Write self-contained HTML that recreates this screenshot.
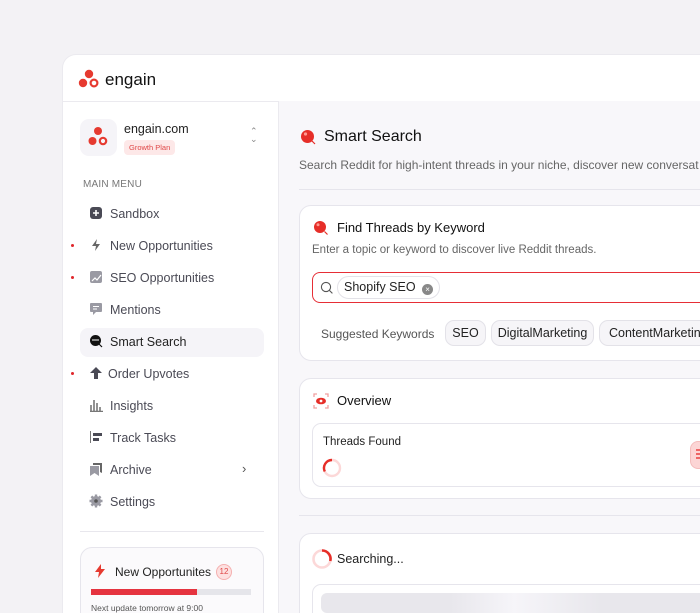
<!DOCTYPE html>
<html><head><meta charset="utf-8"><style>
*{box-sizing:border-box;margin:0;padding:0}
html,body{width:700px;height:613px;overflow:hidden}
body{background:#f3f2f5;font-family:"Liberation Sans",sans-serif;position:relative}
.frame{position:absolute;left:62px;top:54px;width:638px;height:559px;background:#fff;border-radius:14px 0 0 0;border:1px solid #ebeaef;border-right:none;border-bottom:none;overflow:hidden}
.hdr{height:47px;border-bottom:1px solid #ebeaef;position:relative}
.side{position:absolute;left:0;top:47px;width:216px;height:512px;border-right:1px solid #ebeaef;background:#fff;overflow:hidden}
.main{position:absolute;left:216px;top:46px;width:422px;height:513px;background:#f8f7fa;overflow:hidden}
.t{position:absolute;white-space:nowrap}
.mi{position:absolute;left:47px;font-size:12.5px;color:#4a4a55}
.dot{position:absolute;left:8px;width:3px;height:3px;background:#e0262b;border-radius:50%}
.ic{position:absolute;left:26px}
.card{position:absolute;background:#fff;border:1px solid #e6e5ec;border-radius:12px}
.chip{position:absolute;top:0;height:26px;border:1px solid #e3e2e8;border-radius:9px;background:#f6f5f8;font-size:12.5px;color:#222;line-height:24px;text-align:center}
</style></head><body>
<div class="frame">
 <div class="hdr">
  <svg class="t" style="left:15px;top:14px" width="22" height="20" viewBox="0 0 22 20"><circle cx="11" cy="5" r="4.2" fill="#e63a30"/><circle cx="5" cy="14" r="4.2" fill="#e63a30"/><circle cx="16" cy="14" r="3.4" fill="none" stroke="#e63a30" stroke-width="2.2"/></svg>
  <div class="t" style="left:42px;top:15px;font-size:17px;color:#111">engain</div>
 </div>
 <div class="side">
  <div class="t" style="left:17px;top:17px;width:37px;height:37px;background:#f5f4f8;border-radius:9px"></div>
  <svg class="t" style="left:24px;top:24px" width="22" height="22" viewBox="0 0 22 22"><circle cx="11" cy="5" r="4" fill="#e63a30"/><circle cx="5.5" cy="15" r="4" fill="#e63a30"/><circle cx="16" cy="15" r="3.2" fill="none" stroke="#e63a30" stroke-width="2.2"/></svg>
  <div class="t" style="left:61px;top:20px;font-size:12.5px;color:#222">engain.com</div>
  <div class="t" style="left:61px;top:38px;height:15px;padding:0 5px;background:#fde8e8;border-radius:4px;font-size:7.5px;color:#e04848;line-height:15px">Growth Plan</div>
  <div class="t" style="left:187px;top:25px;font-size:9px;color:#888;line-height:8px">⌃<br>⌄</div>
  <div class="t" style="left:20px;top:77px;font-size:10px;color:#777;letter-spacing:.2px">MAIN MENU</div>

  <svg class="ic" style="top:104px" width="14" height="14"><rect x="1" y="1" width="12" height="12" rx="3" fill="#4a4a55"/><path d="M7 4v6M4 7h6" stroke="#fff" stroke-width="1.6"/></svg>
  <div class="mi t" style="top:105px">Sandbox</div>

  <div class="dot" style="top:142px"></div>
  <svg class="ic" style="top:136px" width="14" height="14"><path d="M8 1L3 8h4l-1 5 5-7H7z" fill="#666"/></svg>
  <div class="mi t" style="top:137px">New Opportunities</div>

  <div class="dot" style="top:174px"></div>
  <svg class="ic" style="top:168px" width="14" height="14"><rect x="1" y="1" width="12" height="12" rx="2" fill="#9a9aa3"/><path d="M3 11l3-3 2 2 4-5" stroke="#fff" stroke-width="1.2" fill="none"/></svg>
  <div class="mi t" style="top:169px">SEO Opportunities</div>

  <svg class="ic" style="top:200px" width="14" height="14"><path d="M2 1h10a1 1 0 011 1v7a1 1 0 01-1 1H7l-3 3v-3H2a1 1 0 01-1-1V2a1 1 0 011-1z" fill="#9a9aa3"/><path d="M4 4.5h6M4 7h4" stroke="#fff" stroke-width="1"/></svg>
  <div class="mi t" style="top:201px">Mentions</div>

  <div class="t" style="left:17px;top:226px;width:184px;height:29px;background:#f5f4f8;border-radius:8px"></div>
  <svg class="ic" style="top:232px" width="14" height="14"><circle cx="6.5" cy="6.5" r="5.5" fill="#111"/><path d="M10 10l3 3" stroke="#111" stroke-width="1.2"/><path d="M3 6h7" stroke="#fff" stroke-width="1"/></svg>
  <div class="mi t" style="top:233px;color:#222">Smart Search</div>

  <div class="dot" style="top:270px"></div>
  <svg class="t" style="left:26px;top:264px" width="14" height="14"><path d="M7 1l6 6H9v6H5V7H1z" fill="#4a4a55"/></svg>
  <div class="mi t" style="left:45px;top:265px">Order Upvotes</div>

  <svg class="ic" style="top:296px" width="14" height="14"><path d="M2 13V7M5 13V2M8 13V5M11 13V9M1 13.5h13" stroke="#777" stroke-width="1.6"/></svg>
  <div class="mi t" style="top:297px">Insights</div>

  <svg class="ic" style="top:328px" width="14" height="14"><path d="M1.5 1v12" stroke="#777" stroke-width="1"/><rect x="4" y="3" width="9" height="3" fill="#4a4a55"/><rect x="4" y="8" width="6" height="3" fill="#4a4a55"/></svg>
  <div class="mi t" style="top:329px">Track Tasks</div>

  <svg class="ic" style="top:360px" width="14" height="14"><path d="M1 4h9v10l-4.5-3L1 14z" fill="#9a9aa3"/><path d="M4 1h9v10l-2-1V3H4z" fill="#666"/></svg>
  <div class="mi t" style="top:361px">Archive</div>
  <div class="t" style="left:179px;top:359px;font-size:13px;color:#555">›</div>

  <svg class="ic" style="top:392px" width="14" height="14"><circle cx="7" cy="7" r="5" fill="#9a9aa3"/><g stroke="#9a9aa3" stroke-width="2.4"><path d="M7 0.5v13M0.5 7h13M2.4 2.4l9.2 9.2M11.6 2.4l-9.2 9.2"/></g><circle cx="7" cy="7" r="1.8" fill="#555"/></svg>
  <div class="mi t" style="top:393px">Settings</div>

  <div class="t" style="left:17px;top:429px;width:184px;height:1px;background:#e8e7ed"></div>
  <div class="t" style="left:17px;top:445px;width:184px;height:80px;border:1px solid #e6e5ec;border-radius:12px;background:#fbfafc"></div>
  <svg class="t" style="left:31px;top:462px" width="12" height="14"><path d="M7 0L1 8h4l-1 6 7-9H7z" fill="#e63a30"/></svg>
  <div class="t" style="left:52px;top:463px;font-size:12px;color:#222">New Opportunites</div>
  <div class="t" style="left:153px;top:462px;width:16px;height:16px;border-radius:50%;background:#fde0e0;border:1px solid #f4b0b0;font-size:8px;color:#e04848;text-align:center;line-height:14px">12</div>
  <div class="t" style="left:28px;top:487px;width:160px;height:6px;background:#e5e5ea"></div>
  <div class="t" style="left:28px;top:487px;width:106px;height:6px;background:#e5333f"></div>
  <div class="t" style="left:28px;top:501px;font-size:8.5px;color:#555">Next update tomorrow at 9:00</div>
 </div>

 <div class="main">
  <svg class="t" style="left:21px;top:28px" width="17" height="17"><circle cx="7.5" cy="7.5" r="6.5" fill="#e62e28"/><circle cx="5.5" cy="5" r="1.6" fill="#ff9a90"/><path d="M12 12l3 3" stroke="#e62e28" stroke-width="1.2"/></svg>
  <div class="t" style="left:45px;top:27px;font-size:16px;color:#111">Smart Search</div>
  <div class="t" style="left:20px;top:57px;font-size:12px;color:#666">Search Reddit for high-intent threads in your niche, discover new conversat</div>
  <div class="t" style="left:20px;top:88px;width:440px;height:1px;background:#e6e5ec"></div>

  <div class="card" style="left:20px;top:104px;width:440px;height:156px">
   <svg class="t" style="left:13px;top:14px" width="16" height="16"><circle cx="7" cy="7" r="6" fill="#e62e28"/><circle cx="5" cy="4.8" r="1.5" fill="#ff9a90"/><path d="M11.5 11.5l3 3" stroke="#e62e28" stroke-width="1.2"/></svg>
   <div class="t" style="left:37px;top:14px;font-size:13px;color:#111">Find Threads by Keyword</div>
   <div class="t" style="left:12px;top:38px;font-size:11.5px;color:#666">Enter a topic or keyword to discover live Reddit threads.</div>
   <div class="t" style="left:12px;top:66px;width:440px;height:31px;border:1.3px solid #e62e36;border-radius:8px"></div>
   <svg class="t" style="left:20px;top:75px" width="14" height="14"><circle cx="6" cy="6" r="4.6" stroke="#555" stroke-width="1.1" fill="none"/><path d="M9.4 9.4l3 3" stroke="#555" stroke-width="1.1"/></svg>
   <div class="t" style="left:37px;top:70px;height:23px;padding:0 6px;border:1px solid #e3e2e8;border-radius:12px;font-size:12.5px;color:#222;line-height:21px">Shopify SEO <span style="display:inline-block;width:11px;height:11px;border-radius:50%;background:#888;color:#fff;font-size:8px;line-height:11px;text-align:center;vertical-align:-1px;margin-left:3px">×</span></div>
   <div class="t" style="left:21px;top:121px;font-size:12px;color:#555">Suggested Keywords</div>
   <div style="position:absolute;left:145px;top:114px">
    <div class="chip" style="left:0;width:41px">SEO</div>
    <div class="chip" style="left:46px;width:103px">DigitalMarketing</div>
    <div class="chip" style="left:154px;width:120px;text-align:left;padding-left:9px">ContentMarketing</div>
   </div>
  </div>

  <div class="card" style="left:20px;top:277px;width:440px;height:121px">
   <svg class="t" style="left:13px;top:14px" width="16" height="16"><path d="M1 4V1h3M12 1h3v3M15 12v3h-3M4 15H1v-3" stroke="#f0a0a0" stroke-width="1.3" fill="none"/><ellipse cx="8" cy="8" rx="5" ry="3.3" fill="#e62e28"/><circle cx="8" cy="8" r="1.4" fill="#fff"/></svg>
   <div class="t" style="left:37px;top:14px;font-size:13px;color:#111">Overview</div>
   <div class="t" style="left:12px;top:44px;width:440px;height:64px;border:1px solid #e6e5ec;border-radius:9px"></div>
   <div class="t" style="left:23px;top:57px;font-size:11.5px;color:#222">Threads Found</div>
   <svg class="t" style="left:22px;top:79px" width="20" height="20"><circle cx="10" cy="10" r="8" fill="none" stroke="#fcd8d8" stroke-width="2.4"/><path d="M10 2A8 8 0 0 0 2.8 13.5" fill="none" stroke="#e62e28" stroke-width="2.4"/></svg>
   <div class="t" style="left:390px;top:62px;width:30px;height:28px;border-radius:8px;background:#fcd5d5;border:1px solid #f4bcbc"></div>
   <div class="t" style="left:396px;top:70px;width:6px;height:2px;background:#e66;box-shadow:0 4px 0 #e66,0 8px 0 #e66"></div>
  </div>

  <div class="t" style="left:20px;top:414px;width:440px;height:1px;background:#e6e5ec"></div>

  <div class="card" style="left:20px;top:432px;width:440px;height:140px">
   <svg class="t" style="left:11px;top:14px" width="22" height="22"><circle cx="11" cy="11" r="8.5" fill="none" stroke="#fcd8d8" stroke-width="2.6"/><path d="M11 2.5A8.5 8.5 0 0 1 19.3 13" fill="none" stroke="#e62e28" stroke-width="2.6"/></svg>
   <div class="t" style="left:37px;top:18px;font-size:12.5px;color:#222">Searching...</div>
   <div class="t" style="left:12px;top:50px;width:440px;height:60px;border:1px solid #e6e5ec;border-radius:9px"></div>
   <div class="t" style="left:21px;top:59px;width:430px;height:20px;border-radius:6px;background:linear-gradient(90deg,#e8e7ec 0%,#e8e7ec 30%,#f6f5f9 45%,#e8e7ec 65%,#e8e7ec 100%)"></div>
  </div>
 </div>
</div>
</body></html>
